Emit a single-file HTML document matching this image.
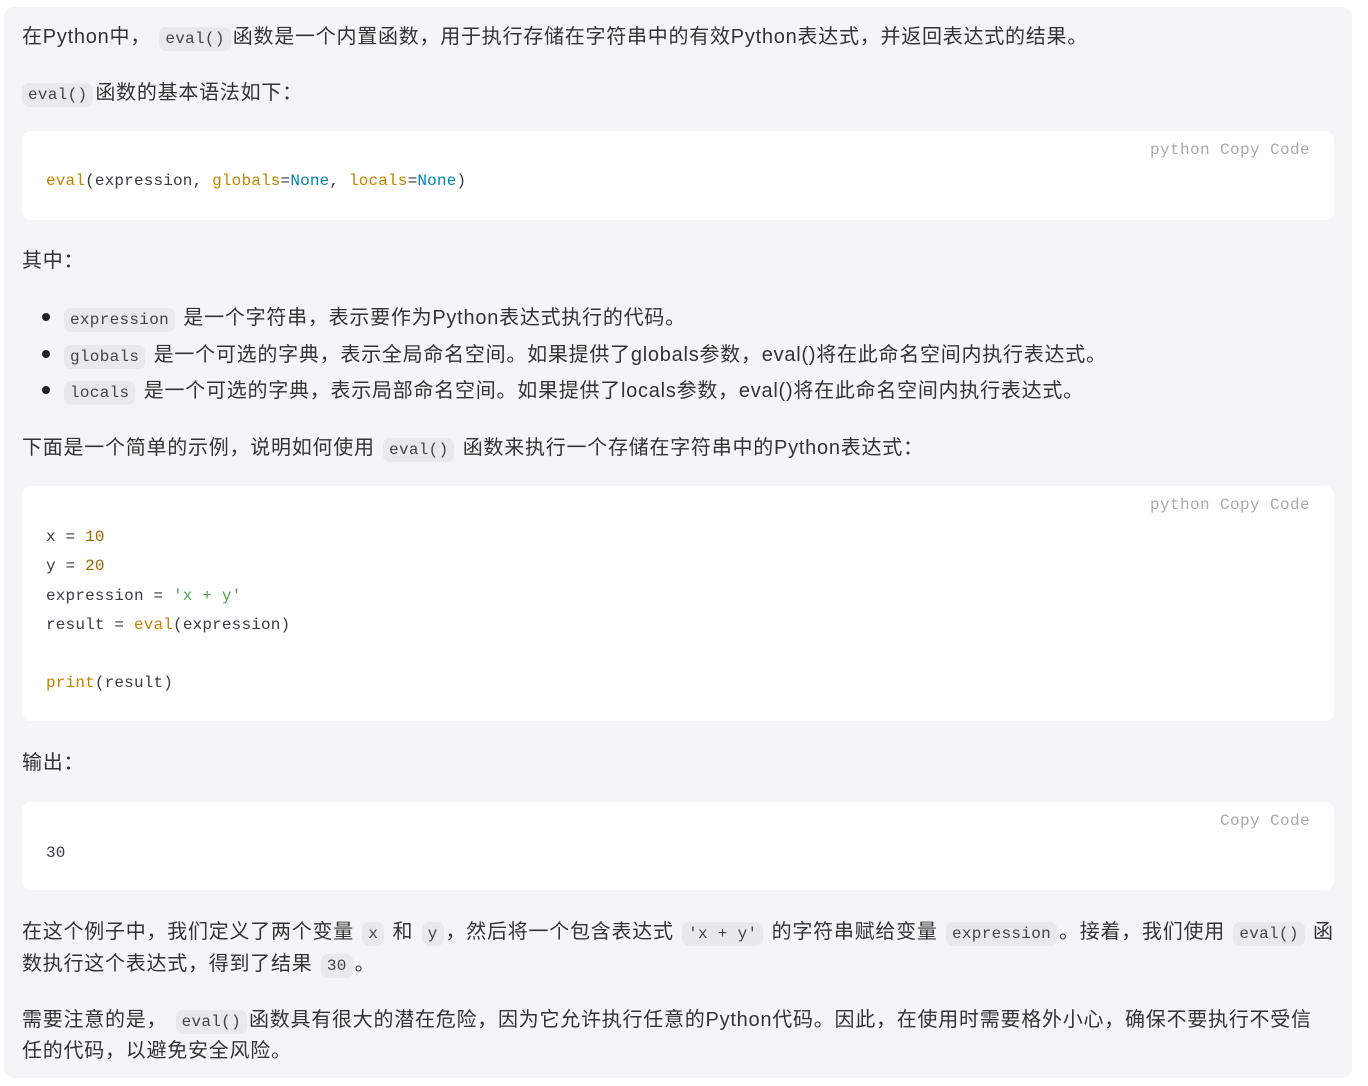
<!DOCTYPE html>
<html><head><meta charset="utf-8"><style>
*{margin:0;padding:0;box-sizing:border-box}
body{width:1368px;height:1086px;background:#fff;position:relative;overflow:hidden;font-family:"Liberation Sans","Noto Sans CJK SC",sans-serif;color:#333;font-size:20px}
.box{position:absolute;left:4px;top:7px;width:1348px;height:1071px;background:#f4f5f7;border-radius:10px}
.l{position:absolute;left:22px;white-space:nowrap;line-height:30px;height:30px;letter-spacing:0.75px;top:1px}
.c{font-family:"Liberation Mono",monospace;font-size:16px;background:#e7e9ec;border-radius:7px;padding:3px 6px;color:#444;margin:0 2px;letter-spacing:0.3px}
.cb{position:absolute;left:22px;width:1312px;background:#fff;border-radius:9px}
.lab{position:absolute;right:24px;top:10px;font-family:"Liberation Mono",monospace;font-size:16px;color:#aaa;letter-spacing:0.4px}
.code{position:absolute;left:24px;font-family:"Liberation Mono",monospace;font-size:16px;letter-spacing:0.17px;color:#383a42;white-space:pre;line-height:29.3px}
.f{color:#c18401}.n{color:#0184bc}.g{color:#50a14f}.num{color:#986801}
.dot{position:absolute;left:42px;width:8px;height:8px;border-radius:50%;background:#222}
</style></head><body>
<div class="box"></div>
<div class="l" style="top:22px">在Python中， <span class="c">eval()</span>函数是一个内置函数，用于执行存储在字符串中的有效Python表达式，并返回表达式的结果。</div>
<div class="l" style="top:78px"><span class="c" style="margin-left:0">eval()</span>函数的基本语法如下：</div>
<div class="cb" style="top:131px;height:89px"><div class="lab">python Copy Code</div>
<div class="code" style="top:36px"><span class="f">eval</span>(expression, <span class="f">globals</span>=<span class="n">None</span>, <span class="f">locals</span>=<span class="n">None</span>)</div></div>
<div class="l" style="top:246px">其中：</div>
<div class="dot" style="top:313px"></div><div class="dot" style="top:350px"></div><div class="dot" style="top:386px"></div>
<div class="l" style="left:62px;top:303px"><span class="c">expression</span> 是一个字符串，表示要作为Python表达式执行的代码。</div>
<div class="l" style="left:62px;top:340px"><span class="c">globals</span> 是一个可选的字典，表示全局命名空间。如果提供了globals参数，eval()将在此命名空间内执行表达式。</div>
<div class="l" style="left:62px;top:376px"><span class="c">locals</span> 是一个可选的字典，表示局部命名空间。如果提供了locals参数，eval()将在此命名空间内执行表达式。</div>
<div class="l" style="top:433px">下面是一个简单的示例，说明如何使用 <span class="c">eval()</span> 函数来执行一个存储在字符串中的Python表达式：</div>
<div class="cb" style="top:486px;height:235px"><div class="lab">python Copy Code</div>
<div class="code" style="top:37px">x = <span class="num">10</span>
y = <span class="num">20</span>
expression = <span class="g">'x + y'</span>
result = <span class="f">eval</span>(expression)

<span class="f">print</span>(result)</div></div>
<div class="l" style="top:748px">输出：</div>
<div class="cb" style="top:802px;height:88px"><div class="lab">Copy Code</div>
<div class="code" style="top:37px">30</div></div>
<div class="l" style="top:917px">在这个例子中，我们定义了两个变量 <span class="c">x</span> 和 <span class="c">y</span>，然后将一个包含表达式 <span class="c">'x + y'</span> 的字符串赋给变量 <span class="c">expression</span>。接着，我们使用 <span class="c">eval()</span> 函</div>
<div class="l" style="top:949px">数执行这个表达式，得到了结果 <span class="c">30</span>。</div>
<div class="l" style="top:1005px">需要注意的是， <span class="c">eval()</span>函数具有很大的潜在危险，因为它允许执行任意的Python代码。因此，在使用时需要格外小心，确保不要执行不受信</div>
<div class="l" style="top:1036px">任的代码，以避免安全风险。</div>
</body></html>
